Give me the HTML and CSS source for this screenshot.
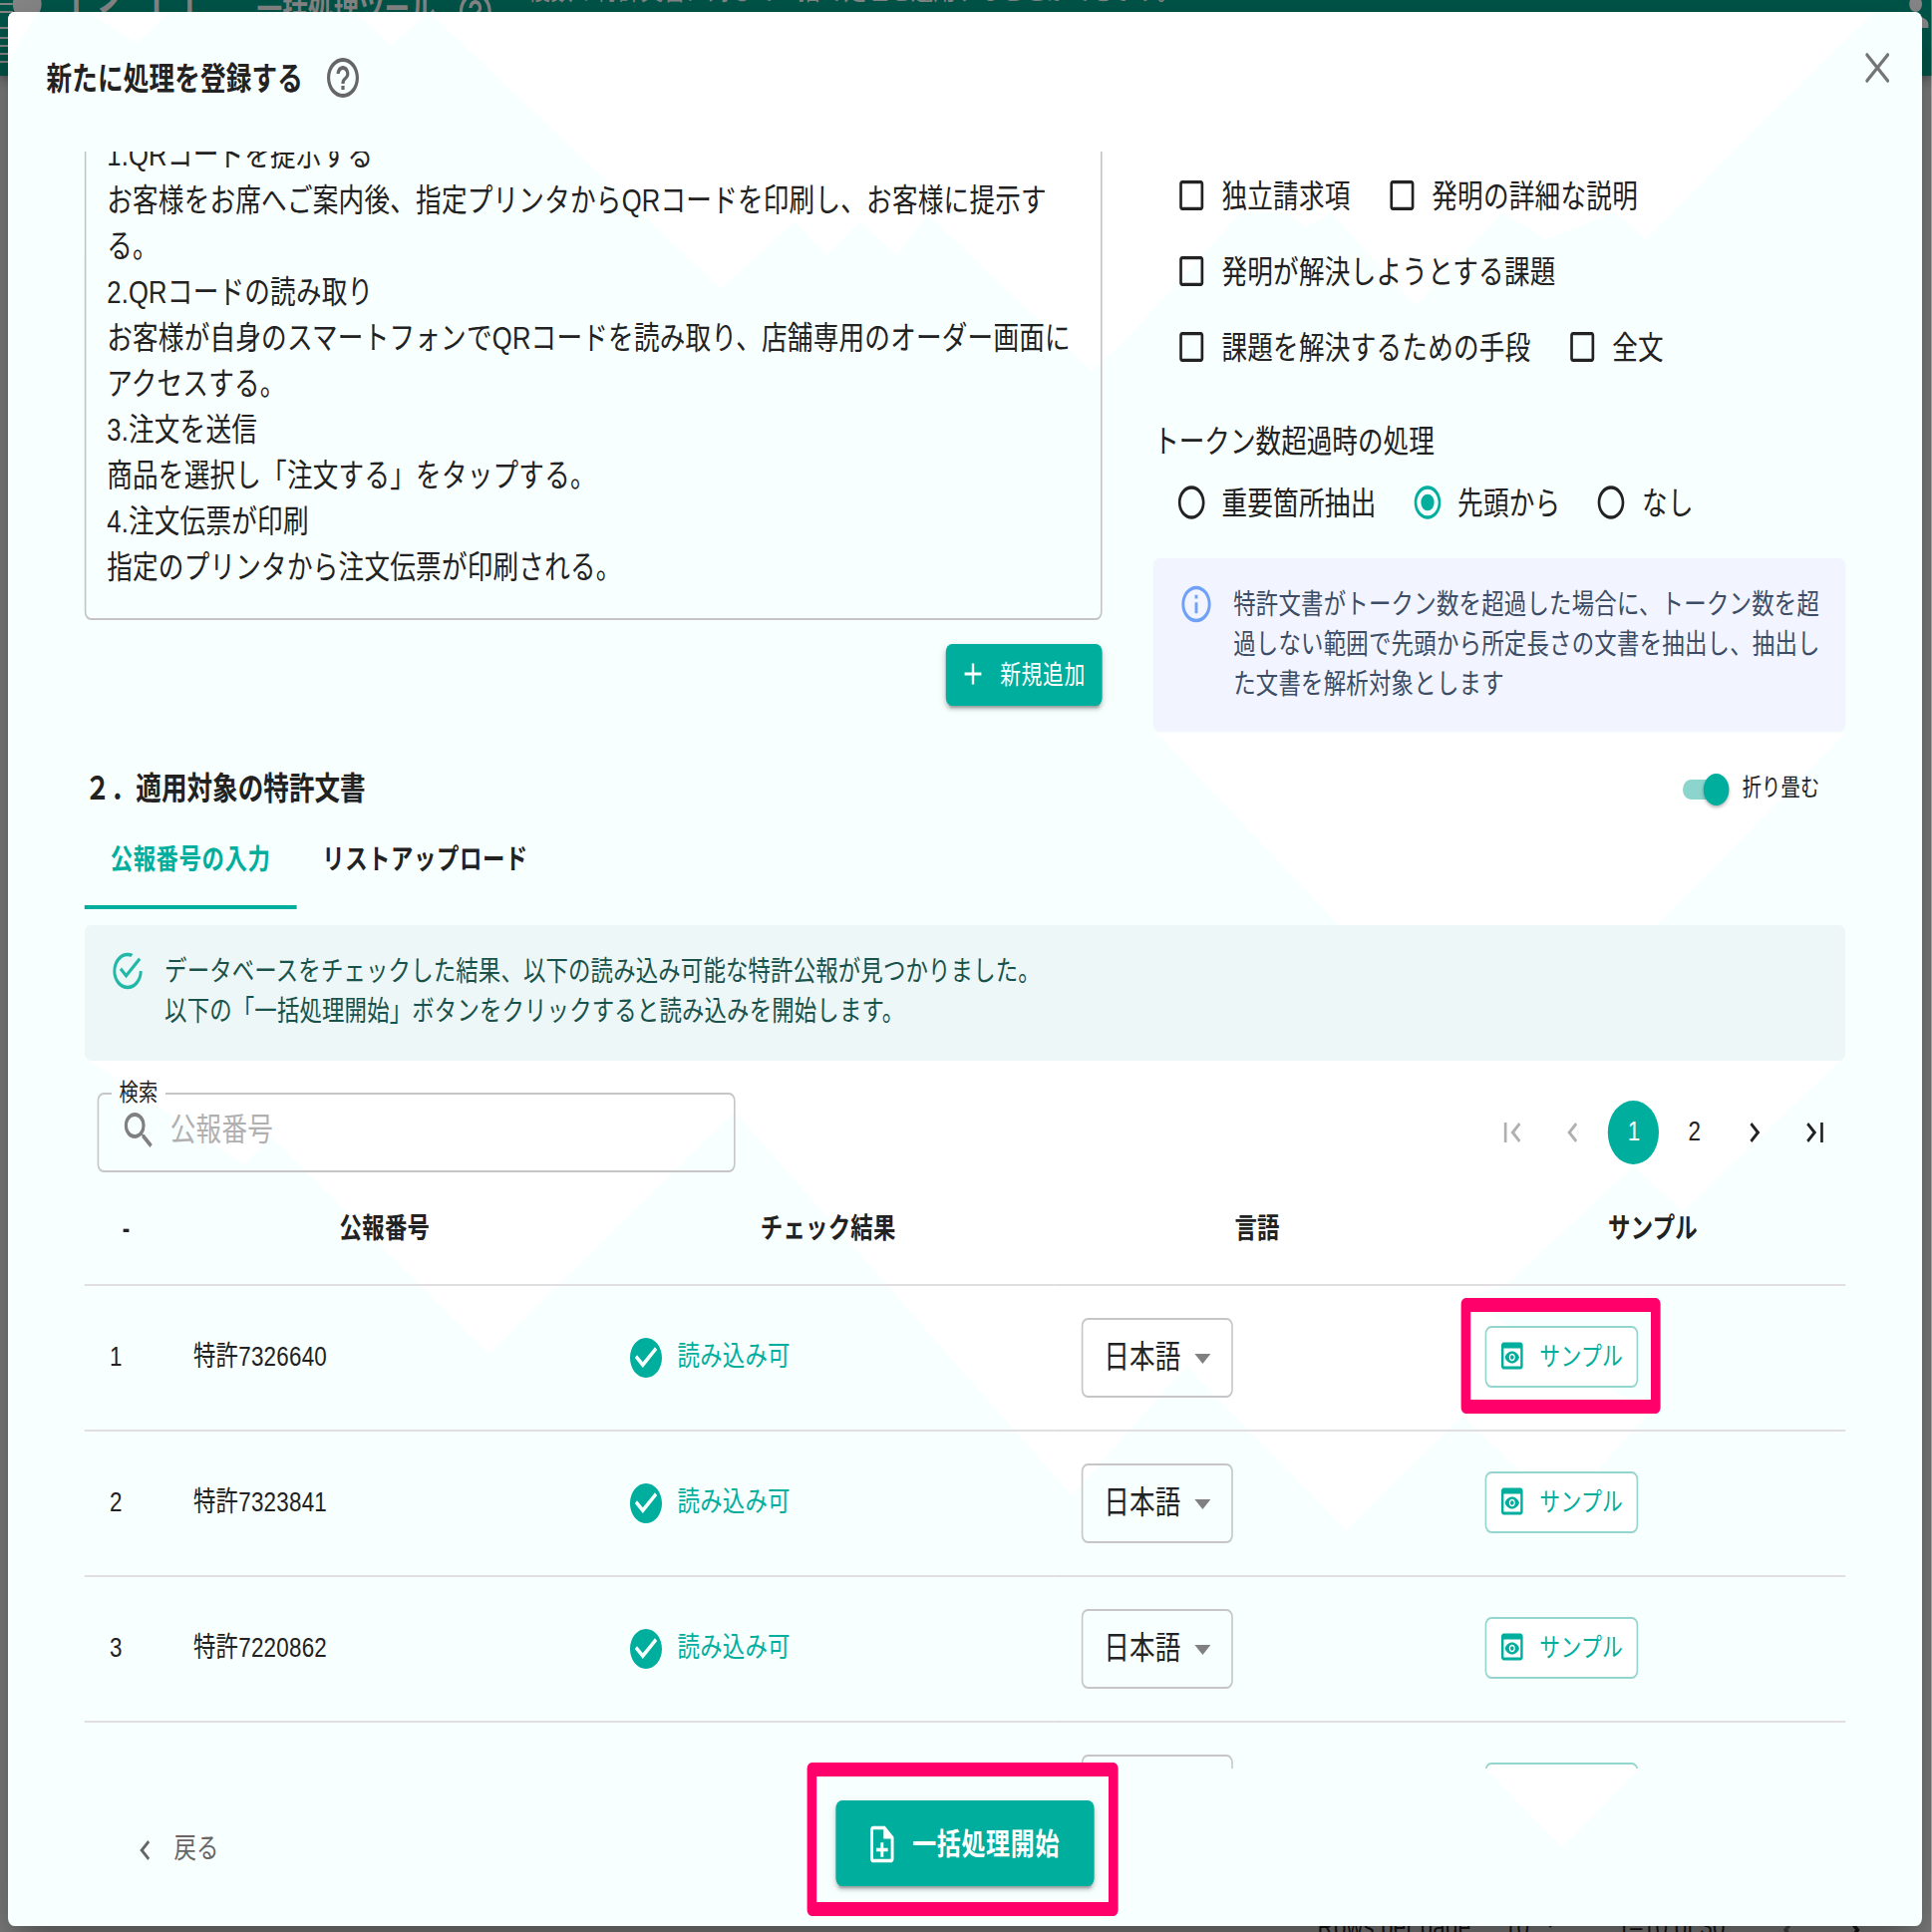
FILE: index.html
```html
<!DOCTYPE html>
<html lang="ja">
<head>
    <meta charset="UTF-8">
    <title>一括処理ツール</title>
    <link rel="stylesheet" href="styles.css">
</head>
<body>
    <svg class="sprite" aria-hidden="true">
        <symbol id="i-help" viewBox="0 0 24 24"><path d="M11 18h2v-2h-2v2zm1-16C6.48 2 2 6.48 2 12s4.48 10 10 10 10-4.48 10-10S17.52 2 12 2zm0 18c-4.41 0-8-3.59-8-8s3.59-8 8-8 8 3.59 8 8-3.59 8-8 8zm0-14c-2.21 0-4 1.79-4 4h2c0-1.1.9-2 2-2s2 .9 2 2c0 2-3 1.75-3 5h2c0-2.25 3-2.5 3-5 0-2.21-1.79-4-4-4z"/></symbol>
        <symbol id="i-close" viewBox="0 0 24 24"><path d="M5.5 5.5l13 13M18.5 5.5l-13 13" fill="none" stroke="currentColor" stroke-width="1.9" stroke-linecap="round"/></symbol>
        <symbol id="i-box" viewBox="0 0 24 24"><path d="M19 5v14H5V5h14m0-2H5c-1.1 0-2 .9-2 2v14c0 1.1.9 2 2 2h14c1.1 0 2-.9 2-2V5c0-1.1-.9-2-2-2z"/></symbol>
        <symbol id="i-radio" viewBox="0 0 24 24"><path d="M12 2C6.48 2 2 6.48 2 12s4.48 10 10 10 10-4.48 10-10S17.52 2 12 2zm0 18c-4.42 0-8-3.58-8-8s3.58-8 8-8 8 3.58 8 8-3.58 8-8 8z"/></symbol>
        <symbol id="i-radio-on" viewBox="0 0 24 24"><path d="M12 2C6.48 2 2 6.48 2 12s4.48 10 10 10 10-4.48 10-10S17.52 2 12 2zm0 18c-4.42 0-8-3.58-8-8s3.58-8 8-8 8 3.58 8 8-3.58 8-8 8z"/><circle cx="12" cy="12" r="5"/></symbol>
        <symbol id="i-info" viewBox="0 0 24 24"><path d="M11 7h2v2h-2zM11 11h2v6h-2zM12 2C6.48 2 2 6.48 2 12s4.48 10 10 10 10-4.48 10-10S17.52 2 12 2zm0 18c-4.41 0-8-3.59-8-8s3.59-8 8-8 8 3.59 8 8-3.59 8-8 8z"/></symbol>
        <symbol id="i-success" viewBox="0 0 24 24"><path d="M20 12a8 8 0 0 1-8 8 8 8 0 0 1-8-8 8 8 0 0 1 8-8c.76 0 1.5.11 2.2.31l1.57-1.57A9.822 9.822 0 0 0 12 2 10 10 0 0 0 2 12a10 10 0 0 0 10 10 10 10 0 0 0 10-10M7.91 10.08L6.5 11.5 11 16 21 6l-1.41-1.42L11 13.17l-3.09-3.09z"/></symbol>
        <symbol id="i-plus" viewBox="0 0 24 24"><path d="M19 13h-6v6h-2v-6H5v-2h6V5h2v6h6v2z"/></symbol>
        <symbol id="i-search" viewBox="0 0 24 24"><path d="M15.5 14h-.79l-.28-.27A6.471 6.471 0 0 0 16 9.5 6.5 6.5 0 1 0 9.5 16c1.61 0 3.09-.59 4.23-1.57l.27.28v.79l5 4.99L20.49 19l-4.99-5zm-6 0C7.01 14 5 11.99 5 9.5S7.01 5 9.5 5 14 7.01 14 9.5 11.99 14 9.5 14z"/></symbol>
        <symbol id="i-first" viewBox="0 0 24 24"><path d="M18.41 16.59L13.82 12l4.59-4.59L17 6l-6 6 6 6zM6 6h2v12H6z"/></symbol>
        <symbol id="i-prev" viewBox="0 0 24 24"><path d="M15.41 7.41L14 6l-6 6 6 6 1.41-1.41L10.83 12z"/></symbol>
        <symbol id="i-next" viewBox="0 0 24 24"><path d="M10 6L8.59 7.41 13.17 12l-4.58 4.59L10 18l6-6z"/></symbol>
        <symbol id="i-last" viewBox="0 0 24 24"><path d="M5.59 7.41L10.18 12l-4.59 4.59L7 18l6-6-6-6zM16 6h2v12h-2z"/></symbol>
        <symbol id="i-check" viewBox="0 0 24 24"><path d="M12 2C6.48 2 2 6.48 2 12s4.48 10 10 10 10-4.48 10-10S17.52 2 12 2zm-2 15l-5-5 1.41-1.41L10 14.17l7.59-7.59L19 8l-9 9z"/></symbol>
        <symbol id="i-preview" viewBox="0 0 24 24"><path d="M19 3H5c-1.11 0-2 .9-2 2v14c0 1.1.89 2 2 2h14c1.1 0 2-.9 2-2V5c0-1.1-.89-2-2-2zm0 16H5V7h14v12zm-5.5-6c0 .83-.67 1.5-1.5 1.5s-1.5-.67-1.5-1.5.67-1.5 1.5-1.5 1.5.67 1.5 1.5zM12 9c-2.73 0-5.06 1.66-6 4 .94 2.34 3.27 4 6 4s5.06-1.66 6-4c-.94-2.34-3.27-4-6-4zm0 6.5c-1.38 0-2.5-1.12-2.5-2.5s1.12-2.5 2.5-2.5 2.5 1.12 2.5 2.5-1.12 2.5-2.5 2.5z"/></symbol>
        <symbol id="i-note" viewBox="0 0 24 24"><path d="M13 11h-2v3H8v2h3v3h2v-3h3v-2h-3zm1-9H6c-1.1 0-2 .9-2 2v16c0 1.1.89 2 1.99 2H18c1.1 0 2-.9 2-2V8l-6-6zm4 18H6V4h7v5h5v11z"/></symbol>
        <symbol id="i-down" viewBox="0 0 24 24"><path d="M7 10l5 5 5-5z"/></symbol>
        <symbol id="i-person" viewBox="0 0 24 24"><path d="M12 12c2.21 0 4-1.79 4-4s-1.79-4-4-4-4 1.79-4 4 1.79 4 4 4zm0 2c-2.67 0-8 1.34-8 4v2h16v-2c0-2.66-5.33-4-8-4z"/></symbol>
    </svg>

    <div class="screen">
        <!-- page behind the dialog -->
        <header class="topbar">
            <svg class="topbar-logo" viewBox="0 0 30 34"><path d="M0 2h8M0 6h8M0 14h8M0 19h6M0 23h8M0 27h6M0 31h9" stroke="currentColor" fill="none"/><ellipse cx="17" cy="2" rx="9" ry="8"/></svg>
            <span class="topbar-brand">イノイト</span>
            <span class="topbar-title">一括処理ツール</span>
            <svg class="icon topbar-help"><use href="#i-help"/></svg>
            <span class="topbar-desc">複数の特許文書に対して一括で処理を適用することができます。</span>
            <svg class="icon topbar-user"><use href="#i-person"/></svg>
        </header>
        <div class="page-footer">
            <span class="rows-label">Rows per page:</span>
            <span class="rows-size">10</span>
            <svg class="icon rows-arrow"><use href="#i-down"/></svg>
            <span class="rows-range">1–10 of 30</span>
            <svg class="icon rows-prev"><use href="#i-prev"/></svg>
            <svg class="icon rows-next"><use href="#i-next"/></svg>
        </div>

        <div class="dialog">
            <svg class="dialog-pattern" viewBox="0 0 1938 1938" preserveAspectRatio="none">
                <path d="M0 0H45L8 62zM88 12H170L137 43zM355 12H430L393 45zM430 12H1880L1770 120L1651 240L1620 213L1551 240L1507 213L1420 307L1335 213L1310 228L1290 213L1245 213L1130 340L1095 372L930 215L900 256L862 222L830 256L797 222L723 290z"/>
                <path d="M1160 735H1852L1660 930H1345z"/>
                <path d="M83 1060L245 1168L272 1140L490 1358L737 1115L1075 1500L1190 1370L1350 1535L1467 1420L1565 1515L1655 1417L1467 1301L1510 1290L1638 1170L1688 1215L1850 1060z"/>
                <path d="M1490 1774H1645L1567 1853z"/>
            </svg>

            <div class="dialog-header">
                <h2>新たに処理を登録する</h2>
                <svg class="icon help"><use href="#i-help"/></svg>
                <svg class="icon close"><use href="#i-close"/></svg>
            </div>

            <div class="dialog-content">
                <div class="prompt-grid">
                    <div class="prompt-col">
                        <div class="prompt-text">1.QRコードを提示する<br>お客様をお席へご案内後、指定プリンタからQRコードを印刷し、お客様に提示す<br>る。<br>2.QRコードの読み取り<br>お客様が自身のスマートフォンでQRコードを読み取り、店舗専用のオーダー画面に<br>アクセスする。<br>3.注文を送信<br>商品を選択し「注文する」をタップする。<br>4.注文伝票が印刷<br>指定のプリンタから注文伝票が印刷される。</div>
                        <button class="btn btn-small btn-filled"><svg class="icon"><use href="#i-plus"/></svg>新規追加</button>
                    </div>
                    <div class="option-col">
                        <div class="options">
                            <label><svg class="icon"><use href="#i-box"/></svg>独立請求項</label>
                            <label><svg class="icon"><use href="#i-box"/></svg>発明の詳細な説明</label>
                        </div>
                        <div class="options">
                            <label><svg class="icon"><use href="#i-box"/></svg>発明が解決しようとする課題</label>
                        </div>
                        <div class="options">
                            <label><svg class="icon"><use href="#i-box"/></svg>課題を解決するための手段</label>
                            <label><svg class="icon"><use href="#i-box"/></svg>全文</label>
                        </div>
                        <div class="option-title">トークン数超過時の処理</div>
                        <div class="options">
                            <label><svg class="icon"><use href="#i-radio"/></svg>重要箇所抽出</label>
                            <label><svg class="icon checked"><use href="#i-radio-on"/></svg>先頭から</label>
                            <label><svg class="icon"><use href="#i-radio"/></svg>なし</label>
                        </div>
                        <div class="alert alert-info">
                            <svg class="icon"><use href="#i-info"/></svg>
                            <p>特許文書がトークン数を超過した場合に、トークン数を超<br>過しない範囲で先頭から所定長さの文書を抽出し、抽出し<br>た文書を解析対象とします</p>
                        </div>
                    </div>
                </div>

                <div class="section-head">
                    <h3>２．適用対象の特許文書</h3>
                    <div class="fold">
                        <span class="switch"><span class="switch-thumb"></span></span>
                        <span class="fold-label">折り畳む</span>
                    </div>
                </div>

                <div class="tabs">
                    <span class="tab active">公報番号の入力</span>
                    <span class="tab">リストアップロード</span>
                </div>

                <div class="alert alert-success">
                    <svg class="icon"><use href="#i-success"/></svg>
                    <p>データベースをチェックした結果、以下の読み込み可能な特許公報が見つかりました。<br>以下の「一括処理開始」ボタンをクリックすると読み込みを開始します。</p>
                </div>

                <div class="toolbar">
                    <fieldset class="search">
                        <legend>検索</legend>
                        <div class="search-inner">
                            <svg class="icon"><use href="#i-search"/></svg>
                            <span>公報番号</span>
                        </div>
                    </fieldset>
                    <div class="pagination">
                        <span class="disabled"><svg class="icon"><use href="#i-first"/></svg></span>
                        <span class="disabled"><svg class="icon"><use href="#i-prev"/></svg></span>
                        <span class="current">1</span>
                        <span>2</span>
                        <span><svg class="icon"><use href="#i-next"/></svg></span>
                        <span><svg class="icon"><use href="#i-last"/></svg></span>
                    </div>
                </div>

                <table class="patents">
                    <colgroup>
                        <col class="col-no"><col class="col-number"><col class="col-result"><col class="col-lang"><col>
                    </colgroup>
                    <thead>
                        <tr><th>-</th><th>公報番号</th><th>チェック結果</th><th>言語</th><th>サンプル</th></tr>
                    </thead>
                    <tbody>
                        <tr>
                            <td>1</td>
                            <td>特許7326640</td>
                            <td><span class="status"><svg class="icon"><use href="#i-check"/></svg>読み込み可</span></td>
                            <td><span class="select">日本語<svg class="icon"><use href="#i-down"/></svg></span></td>
                            <td><span class="marked"><button class="btn btn-small btn-line"><svg class="icon"><use href="#i-preview"/></svg>サンプル</button><i class="mark mark-sample"></i></span></td>
                        </tr>
                        <tr>
                            <td>2</td>
                            <td>特許7323841</td>
                            <td><span class="status"><svg class="icon"><use href="#i-check"/></svg>読み込み可</span></td>
                            <td><span class="select">日本語<svg class="icon"><use href="#i-down"/></svg></span></td>
                            <td><button class="btn btn-small btn-line"><svg class="icon"><use href="#i-preview"/></svg>サンプル</button></td>
                        </tr>
                        <tr>
                            <td>3</td>
                            <td>特許7220862</td>
                            <td><span class="status"><svg class="icon"><use href="#i-check"/></svg>読み込み可</span></td>
                            <td><span class="select">日本語<svg class="icon"><use href="#i-down"/></svg></span></td>
                            <td><button class="btn btn-small btn-line"><svg class="icon"><use href="#i-preview"/></svg>サンプル</button></td>
                        </tr>
                        <tr>
                            <td></td>
                            <td></td>
                            <td></td>
                            <td><span class="select"></span></td>
                            <td><button class="btn btn-small btn-line"></button></td>
                        </tr>
                    </tbody>
                </table>
            </div>

            <div class="dialog-actions">
                <span class="back"><svg class="icon"><use href="#i-prev"/></svg>戻る</span>
                <span class="marked">
                    <button class="btn btn-large btn-filled"><svg class="icon"><use href="#i-note"/></svg>一括処理開始</button>
                    <i class="mark mark-start"></i>
                </span>
            </div>
        </div>
    </div>
</body>
</html>
```

FILE: styles.css
```css
* {
    box-sizing: border-box;
}
html, body {
    margin: 0;
    overflow: hidden;
}
body {
    width: 1938px;
    height: 1938px;
    font-family: "Liberation Sans", "Noto Sans CJK JP", sans-serif;
    color: #222;
}
.sprite {
    display: none;
}
.icon {
    flex: none;
    width: 24px;
    height: 24px;
    fill: currentColor;
}

/* everything is laid out on a 1211 x 969 sheet that fills the window */
.screen {
    position: relative;
    width: 1211.25px;
    height: 969px;
    overflow: hidden;
    background: #7f7f7f;
    transform: scale(1.6, 2);
    transform-origin: 0 0;
    font-size: 16px;
    letter-spacing: 0.15px;
    line-height: 1.5;
}

/* page behind */
.topbar {
    height: 38px;
    background: #00574b;
    color: #8a8a8a;
    box-shadow: 0 2px 5px rgba(0, 0, 0, 0.3);
}
.topbar > * {
    position: absolute;
    white-space: nowrap;
}
.topbar-logo {
    left: 0;
    top: 0;
    width: 30px;
    height: 34px;
    fill: currentColor;
}
.topbar-brand {
    left: 34px;
    top: -21px;
    font-size: 25px;
    font-weight: 500;
}
.topbar-title {
    left: 161px;
    top: -7px;
    font-weight: 700;
    letter-spacing: 0;
}
.topbar-help {
    left: 286px;
    top: -6px;
}
.topbar-desc {
    left: 331px;
    top: -15px;
    font-size: 14px;
}
.topbar-user {
    left: 1189px;
    top: -6px;
}
.page-footer > * {
    position: absolute;
    top: 956px;
    color: #161616;
    font-size: 14px;
    white-space: nowrap;
}
.rows-label {
    left: 826px;
}
.rows-size {
    left: 943px;
}
.page-footer .rows-arrow {
    left: 960px;
    top: 952px;
}
.rows-range {
    left: 1014px;
}
.page-footer .rows-prev {
    left: 1110px;
    top: 956px;
    color: #444;
}
.page-footer .rows-next {
    left: 1150px;
    top: 956px;
}

/* dialog */
.dialog {
    position: absolute;
    left: 5px;
    top: 6px;
    width: 1200.4px;
    height: 960px;
    overflow: hidden;
    border-radius: 4px;
    background: #f8ffff;
    box-shadow: 0 11px 15px -7px rgba(0, 0, 0, 0.2), 0 12px 30px 3px rgba(0, 0, 0, 0.14), 0 9px 40px 8px rgba(0, 0, 0, 0.12);
    display: flex;
    flex-direction: column;
}
.dialog-pattern {
    position: absolute;
    left: -5px;
    top: -6px;
    width: 1211.25px;
    height: 969px;
    fill: #fff;
}
.dialog-header,
.dialog-content,
.dialog-actions {
    position: relative;
    flex: none;
}
.dialog-header {
    height: 70px;
    padding: 22px 16px 0 24px;
    display: flex;
    align-items: flex-start;
}
.dialog-header h2 {
    margin: 0;
    font-size: 16px;
    line-height: 24px;
    font-weight: 700;
    letter-spacing: 0.1px;
}
.help {
    margin: -1px 0 0 13px;
    color: #666;
}
.close {
    margin: -6px 0 0 auto;
    color: #757575;
}
.dialog-content {
    height: 811px;
    padding: 0 48px 0 48.2px;
    overflow: hidden;
}

/* prompt and options */
.prompt-grid {
    display: grid;
    grid-template-columns: 637.4px 434.2px;
    justify-content: space-between;
    height: 319.5px;
    margin-top: -28px;
}
.prompt-text {
    height: 262.6px;
    padding: 16.5px 0 0 12.8px;
    border: 1px solid #c6c3c6;
    border-radius: 4px;
    line-height: 23px;
    letter-spacing: 0.14px;
    white-space: nowrap;
}
.prompt-col .btn {
    margin: 12.3px 0 0 auto;
}
.option-col {
    padding-top: 31.5px;
}
.options {
    display: flex;
    gap: 13px;
    padding-left: 4.7px;
}
.options label {
    display: flex;
    align-items: center;
    height: 38px;
}
.options .icon {
    width: 20px;
    height: 20px;
    margin: -1px 9px 0;
}
.options .checked {
    color: #00ae9d;
}
.option-title {
    margin-top: 16.6px;
    letter-spacing: 0;
    height: 23.6px;
}
.alert {
    display: flex;
    padding: 5.5px 16px;
    border-radius: 4px;
    font-size: 14px;
    line-height: 20px;
    white-space: nowrap;
}
.alert .icon {
    width: 22px;
    height: 22px;
    margin: 7px 12px 0 0;
}
.alert p {
    margin: 0;
    padding: 8px 0;
}
.alert-info {
    height: 87.6px;
    margin-top: 8.2px;
    background: #f2f5ff;
    color: #3d4d66;
}
.alert-info .icon {
    color: #70a1f7;
}
.alert-success {
    height: 68px;
    margin-top: 8px;
    background: #edf7f7;
    color: #19524b;
}
.alert-success p {
    letter-spacing: 0.1px;
}
.alert-success .icon {
    color: #21b8a8;
}

/* buttons */
.btn {
    display: flex;
    align-items: center;
    border: 0;
    border-radius: 4px;
    font-family: inherit;
    font-weight: 400;
    white-space: nowrap;
}
.btn-small {
    height: 30.8px;
    padding: 0 10px 2px;
    font-size: 13px;
    letter-spacing: 0.4px;
}
.btn-small .icon {
    width: 18px;
    height: 18px;
    margin: 2px 8px 0 -2px;
}
.btn-large {
    height: 42.5px;
    padding: 0 22px 3px;
    font-size: 15px;
    font-weight: 700;
    letter-spacing: 0.4px;
}
.btn-large .icon {
    width: 22px;
    height: 22px;
    margin: 3px 8px 0 -4px;
}
.btn-filled {
    background: #00ae9d;
    color: #fff;
    box-shadow: 0 3px 1px -2px rgba(0, 0, 0, 0.2), 0 2px 2px rgba(0, 0, 0, 0.14), 0 1px 5px rgba(0, 0, 0, 0.12);
}
.btn-line {
    width: 96.3px;
    padding: 0 0 2px 9px;
    border: 1px solid #93d6cd;
    background: #fff;
    color: #00ae9d;
    letter-spacing: 0.2px;
}

/* section heading, switch, tabs */
.section-head {
    display: flex;
    align-items: center;
    justify-content: space-between;
    height: 24px;
    margin-top: 16px;
    padding: 0 16.5px 0 0;
}
.section-head h3 {
    margin: 0;
    font-size: 16px;
    font-weight: 700;
    letter-spacing: 0;
}
.fold {
    display: flex;
    align-items: center;
    font-size: 12px;
    gap: 11.3px;
}
.fold-label {
    padding-bottom: 2px;
}
.switch {
    display: flex;
    align-items: center;
    justify-content: flex-end;
    width: 26px;
    height: 10px;
    border-radius: 5px;
    background: #8cd5cd;
}
.switch-thumb {
    width: 16px;
    height: 16px;
    margin-right: -3px;
    border-radius: 50%;
    background: #00ae9d;
    box-shadow: 0 1px 2px rgba(0, 0, 0, 0.3);
    flex: none;
}
.tabs {
    display: flex;
    height: 48px;
}
.tab {
    padding: 11.5px 16px 0;
    font-size: 14px;
    line-height: 24px;
    font-weight: 700;
    letter-spacing: 0.35px;
}
.tab.active {
    width: 132.8px;
    color: #00ae9d;
    border-bottom: 2px solid #00ae9d;
}

/* search and pagination */
.toolbar {
    display: flex;
    justify-content: space-between;
    align-items: flex-end;
    height: 56px;
    padding-left: 8px;
}
.search {
    width: 400px;
    height: 48.5px;
    margin: 0;
    padding: 0 13px 0 8px;
    border: 1px solid #c6c6c6;
    border-radius: 4px;
}
.search legend {
    padding: 0 5px 0 4.5px;
    height: 18px;
    line-height: 18px;
    font-size: 12px;
}
.search-inner {
    display: flex;
    align-items: center;
    gap: 7.5px;
    height: 20px;
    padding-left: 5px;
    color: #b0b0b0;
}
.search .icon {
    color: #808080;
}
.pagination {
    display: flex;
    height: 40px;
    align-items: center;
    font-size: 14px;
}
.pagination span {
    display: flex;
    align-items: center;
    justify-content: center;
    width: 32px;
    height: 32px;
    margin: 0 3px;
    border-radius: 50%;
}
.pagination .icon {
    width: 20px;
    height: 20px;
}
.pagination .disabled {
    color: #b0b0b0;
}
.pagination .current {
    background: #00ae9d;
    color: #fff;
}

/* table */
.patents {
    width: 100%;
    table-layout: fixed;
    border-collapse: separate;
    border-spacing: 0;
    font-size: 14px;
}
.patents th,
.patents td {
    padding: 0 16px;
    border-bottom: 1px solid #e0dee0;
    text-align: left;
}
.patents th {
    height: 57px;
    padding-top: 1px;
    text-align: center;
}
.patents td {
    height: 73px;
}
.patents td:first-child {
    padding-left: 15.5px;
}
.col-no {
    width: 52px;
}
.col-number {
    width: 272px;
}
.col-result {
    width: 284px;
}
.col-lang {
    width: 254px;
}
.status {
    display: flex;
    align-items: center;
    gap: 7.5px;
    color: #00ae9d;
}
.select {
    display: flex;
    align-items: center;
    width: 95px;
    height: 40px;
    margin-left: 0.8px;
    padding-left: 13px;
    border: 1px solid #c6c6c6;
    border-radius: 4px;
    font-size: 16px;
}
.select .icon {
    margin-left: 1.5px;
    color: #808080;
}

/* highlight frames */
.marked {
    position: relative;
    display: inline-flex;
    align-self: flex-start;
    vertical-align: middle;
}
.mark {
    position: absolute;
    border: solid #ff006a;
    border-width: 7px 6.6px;
    border-radius: 3px;
}
.mark-sample {
    inset: -14.5px -13.3px -12.8px -14.8px;
}
.mark-start {
    inset: -19.5px -14.3px -14.8px -18.1px;
}

/* footer */
.dialog-actions {
    display: flex;
    justify-content: center;
    height: 79px;
    padding-top: 16.3px;
}
.back {
    position: absolute;
    left: 76px;
    top: 30px;
    display: flex;
    align-items: center;
    gap: 8px;
    font-size: 14px;
    color: #666;
}
.back .icon {
    width: 20px;
    height: 20px;
}
```
